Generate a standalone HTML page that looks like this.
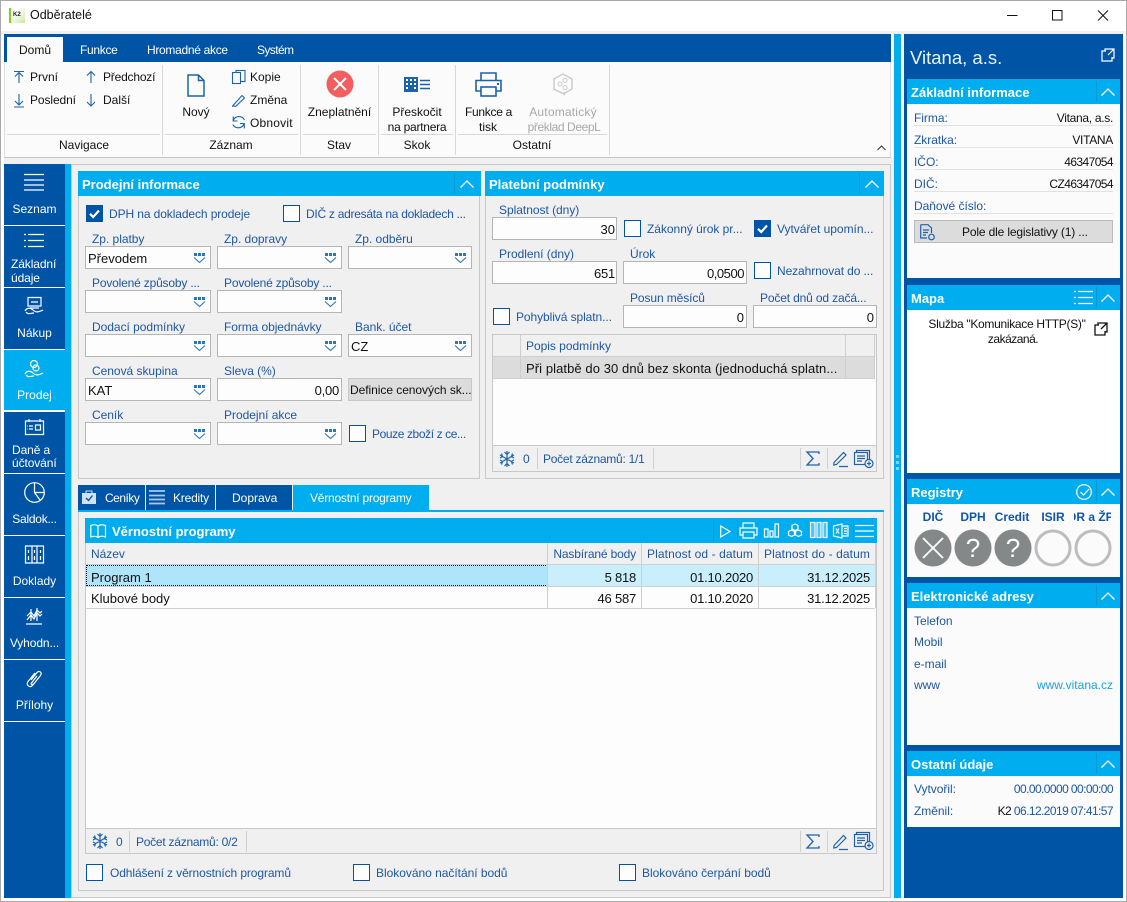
<!DOCTYPE html>
<html lang="cs"><head><meta charset="utf-8"><title>Odběratelé</title>
<style>
html,body{margin:0;padding:0;background:#fff}
body{position:relative;width:1127px;height:902px;overflow:hidden;font-family:"Liberation Sans",sans-serif;font-size:12px;color:#111}
div,span,svg{position:absolute;box-sizing:border-box}
.t{line-height:16px;white-space:nowrap;height:16px}
.l{color:#1d57a5;line-height:16px;white-space:nowrap;height:16px;letter-spacing:-.03px}
.c{text-align:center;transform:translateX(-50%)}
.r{text-align:right;transform:translateX(-100%)}
.d{font-size:13px;color:#111;line-height:16px;white-space:nowrap;height:16px;margin-top:1px}
.n{letter-spacing:-.22px}
.m{letter-spacing:-.58px}
.w{color:#fff;line-height:14px;text-align:center;left:4px;width:61px}
.i{background:#fdfdfd;border:1px solid #b5b5b5;height:23px}
.cb{width:17px;height:17px;border:1px solid #0054a6;background:#fdfdfd}
.cc{width:17px;height:17px;background:#0054a6}
.h{background:#00adef;height:25px;color:#fff;font-weight:bold;font-size:13px;line-height:27px;padding-left:4px;white-space:nowrap}
.p{background:#f0f0f0;border:1px solid #c8c8c8}
.b{background:#fbfbfb}
.s{background:#d8d8d8}
svg{overflow:visible;fill:none}
.ws{stroke:#fff;stroke-width:1.2}
.bs{stroke:#1d62ad;stroke-width:1.2}
</style></head><body>
<svg width="0" height="0" style="left:0;top:0">
<defs>
<symbol id="dd" viewBox="0 0 11 10" overflow="visible"><g fill="#2f74b8"><rect x="0" y="0" width="3" height="3"/><rect x="4" y="0" width="3" height="3"/><rect x="8" y="0" width="3" height="3"/></g><path d="M0 4.500L5.500 9.500L11 4.500" stroke="#2f74b8" fill="none" stroke-width="1.100"/></symbol>
<symbol id="ch" viewBox="0 0 14 8" overflow="visible"><path d="M.5 7.500L7 1L13.500 7.500" stroke="#fff" fill="none" stroke-width="1.300"/></symbol>
<symbol id="ck" viewBox="0 0 17 17"><path d="M4 8.800L7.200 12L13 5.500" stroke="#fff" fill="none" stroke-width="2.200"/></symbol>
<symbol id="snow" viewBox="0 0 16 16" overflow="visible"><g stroke="#1d62ad" stroke-width="1.200" fill="none"><path d="M8 0V16M1 4L15 12M15 4L1 12M5.500 1L8 3.500L10.500 1M5.500 15L8 12.500L10.500 15M1 7L3.500 5.500L2.500 2.500M15 7L12.500 5.500L13.500 2.500M1 9L3.500 10.500L2.500 13.500M15 9L12.500 10.500L13.500 13.500"/></g></symbol>
<symbol id="sig" viewBox="0 0 14 15" overflow="visible"><path d="M13 3V1H1L7 7.500L1 14H13V12" stroke="#1d62ad" fill="none" stroke-width="1.300"/></symbol>
<symbol id="pen" viewBox="0 0 15 16" overflow="visible"><path d="M1 11.500L10.500 1.500L13 4L3.500 13.500L.8 14ZM6 15.500H15" stroke="#1d62ad" fill="none" stroke-width="1.200"/></symbol>
<symbol id="add" viewBox="0 0 20 18" overflow="visible"><g stroke="#1d62ad" fill="#f0f0f0" stroke-width="1.200"><rect x="2.500" y=".5" width="13" height="11"/><rect x=".5" y="2.500" width="13" height="12"/><path d="M3 6H11M3 8.500H11M3 11H8" fill="none"/><circle cx="15" cy="13.500" r="4"/><path d="M15 11.500V15.500M13 13.500H17" fill="none"/></g></symbol>
</defs></svg>

<!-- window frame -->
<div style="left:0;top:0;width:1127px;height:1px;background:#aaa"></div>
<div style="left:0;top:0;width:1px;height:902px;background:#aaa"></div>
<div style="left:1126px;top:0;width:1px;height:902px;background:#aaa"></div>
<div style="left:0;top:901px;width:1127px;height:1px;background:#aaa"></div>
<div style="left:1px;top:31px;width:1125px;height:3px;background:#f0f0f0"></div>
<div style="left:9px;top:8px;width:16px;height:15px;background:linear-gradient(135deg,#fff 30%,#c9e8a0);border-left:2px solid #7ed321"></div>
<div style="left:13px;top:11px;font-size:6px;font-weight:bold;line-height:8px;color:#222">K2</div>
<div class="t" style="left:30px;top:7px;font-size:12.500px;color:#111">Odběratelé</div>
<svg style="left:1007px;top:10px" width="101" height="11"><path d="M0 5.500H10.500" stroke="#111"/><rect x="45.500" y=".5" width="9.500" height="9.500" stroke="#111"/><path d="M91 .5L101 10.500M101 .5L91 10.500" stroke="#111"/></svg>

<!-- ribbon -->
<div style="left:4px;top:34px;width:887px;height:28px;background:#0054a6"></div>
<div style="left:7px;top:37px;width:56px;height:25px;background:#fbfbfb"></div>
<div class="t" style="left:19px;top:42px;color:#111">Domů</div>
<div class="t" style="left:80px;top:42px;color:#fff;letter-spacing:-.3px">Funkce</div>
<div class="t" style="left:147px;top:42px;color:#fff;letter-spacing:-.3px">Hromadné akce</div>
<div class="t" style="left:257px;top:42px;color:#fff;letter-spacing:-.6px">Systém</div>
<div class="b" style="left:4px;top:62px;width:887px;height:96px;border-bottom:1px solid #c4c4c4;border-left:1px solid #ddd;border-right:1px solid #ddd"></div>
<div class="s" style="left:162px;top:65px;width:1px;height:90px"></div>
<div class="s" style="left:300px;top:65px;width:1px;height:90px"></div>
<div class="s" style="left:378px;top:65px;width:1px;height:90px"></div>
<div class="s" style="left:455px;top:65px;width:1px;height:90px"></div>
<div class="s" style="left:609px;top:65px;width:1px;height:90px"></div>
<div class="s" style="left:7px;top:134px;width:153px;height:1px"></div>
<div class="s" style="left:165px;top:134px;width:133px;height:1px"></div>
<div class="s" style="left:303px;top:134px;width:73px;height:1px"></div>
<div class="s" style="left:381px;top:134px;width:72px;height:1px"></div>
<div class="s" style="left:458px;top:134px;width:149px;height:1px"></div>
<div class="t c" style="left:84px;top:137px">Navigace</div>
<div class="t c" style="left:231px;top:137px">Záznam</div>
<div class="t c" style="left:339px;top:137px">Stav</div>
<div class="t c" style="left:417px;top:137px">Skok</div>
<div class="t c" style="left:532px;top:137px">Ostatní</div>
<svg style="left:13px;top:70px" width="90" height="38"><g stroke="#1d62ad" stroke-width="1.100"><path d="M1 1.500H11M6 13V2.500M2 6.500L6 2.500L10 6.500"/><path d="M6 24V35M2 31L6 35L10 31M1 37H11"/><path d="M78 13V1.500M74 5.500L78 1.500L82 5.500"/><path d="M78 24V36M74 32L78 36L82 32"/></g></svg>
<div class="t" style="left:30px;top:69px">První</div>
<div class="t" style="left:30px;top:92px;letter-spacing:-.1px">Poslední</div>
<div class="t" style="left:103px;top:69px;letter-spacing:-.2px">Předchozí</div>
<div class="t" style="left:103px;top:92px">Další</div>
<svg style="left:187px;top:74px" width="18" height="23"><path d="M1 1H11.500L17 6.500V22H1ZM11.500 1V6.500H17" stroke="#1d62ad" stroke-width="1.500"/></svg>
<div class="t c" style="left:196px;top:104px">Nový</div>
<svg style="left:232px;top:70px" width="14" height="60"><g stroke="#1d62ad" stroke-width="1.100"><rect x="4" y=".5" width="9" height="11"/><rect x=".5" y="2.500" width="8" height="11" fill="#fbfbfb"/><path d="M1 35.500L10 25.500L12.500 28L3.500 36.500ZM1 35.500L.5 37"/><path d="M12.500 50A6.200 6.200 0 0 0 1.200 50.500M.8 54.500A6.200 6.200 0 0 0 12 54M1.200 46.500V51H5.500M12.300 58.500V53.500H8"/></g></svg>
<div class="t" style="left:250px;top:69px">Kopie</div>
<div class="t" style="left:250px;top:92px">Změna</div>
<div class="t" style="left:250px;top:115px;letter-spacing:.2px">Obnovit</div>
<svg style="left:326px;top:70px" width="28" height="28"><circle cx="14" cy="14" r="13.500" fill="#f45d5d"/><path d="M8 8L20 20M20 8L8 20" stroke="#fff" stroke-width="2"/></svg>
<div class="t c" style="left:339.500px;top:104px">Zneplatnění</div>
<svg style="left:404px;top:77px" width="27" height="15"><rect x="0" y="0" width="14" height="15" fill="#1d62ad"/><g fill="#fff"><rect x="2" y="2" width="2" height="2"/><rect x="6" y="2" width="2" height="2"/><rect x="10" y="2" width="2" height="2"/><rect x="2" y="6" width="2" height="2"/><rect x="6" y="6" width="2" height="2"/><rect x="10" y="6" width="2" height="2"/><rect x="2" y="10" width="2" height="2"/><rect x="10" y="10" width="2" height="2"/></g><path d="M16 3.500H26M16 7.500H26M16 11.500H26" stroke="#1d62ad" stroke-width="1.500"/></svg>
<div class="t c" style="left:417px;top:104px">Přeskočit</div>
<div class="t c" style="left:417px;top:119px;letter-spacing:-.25px">na partnera</div>
<svg style="left:475px;top:72px" width="27" height="25"><g stroke="#1d62ad" stroke-width="1.600"><path d="M6 8V1H21V8"/><path d="M6 19H1V8.500H26V19H21"/><rect x="6" y="15" width="15" height="9"/></g><rect x="22" y="11" width="2" height="2" fill="#1d62ad"/></svg>
<div class="t c" style="left:488.500px;top:104px;letter-spacing:-.3px">Funkce a</div>
<div class="t c" style="left:488px;top:119px">tisk</div>
<svg style="left:553px;top:73px" width="20" height="23"><path d="M10 1L19 6V16L12 20L11 22V20L10 20.500L1 16V6Z" stroke="#ccc" stroke-width="1.500"/><circle cx="7" cy="11" r="2" stroke="#ccc"/><circle cx="12" cy="7.500" r="2" stroke="#ccc"/><circle cx="12" cy="14.500" r="2" stroke="#ccc"/></svg>
<div class="t c" style="left:563px;top:104px;color:#a8a8a8;letter-spacing:.2px">Automatický</div>
<div class="t c" style="left:564px;top:119px;color:#a8a8a8;letter-spacing:-.4px">překlad DeepL</div>
<svg style="left:877px;top:145px" width="9" height="6"><path d="M.5 5L4.500 1L8.500 5" stroke="#333"/></svg>

<!-- splitter -->
<div style="left:894px;top:34px;width:7px;height:864px;background:#00adef"></div>
<div style="left:891px;top:158px;width:3px;height:740px;background:#f0f0f0"></div>
<div style="left:896px;top:455px;width:3px;height:3px;background:#7ad4f7"></div>
<div style="left:896px;top:461px;width:3px;height:3px;background:#7ad4f7"></div>
<div style="left:896px;top:467px;width:3px;height:3px;background:#7ad4f7"></div>

<!-- left sidebar -->
<div style="left:4px;top:158px;width:887px;height:6px;background:#f0f0f0"></div>
<div style="left:4px;top:164px;width:61px;height:734px;background:#0054a6"></div>
<div style="left:65px;top:164px;width:6px;height:734px;background:#00adef"></div>
<div style="left:4px;top:225px;width:61px;height:1px;background:#fff"></div>
<div style="left:4px;top:287px;width:61px;height:1px;background:#fff"></div>
<div style="left:4px;top:349px;width:61px;height:62px;background:#00adef;border-top:1px solid #fff;border-bottom:1px solid #fff"></div>
<div style="left:4px;top:473px;width:61px;height:1px;background:#fff"></div>
<div style="left:4px;top:411px;width:61px;height:1px;background:#fff"></div>
<div style="left:4px;top:535px;width:61px;height:1px;background:#fff"></div>
<div style="left:4px;top:597px;width:61px;height:1px;background:#fff"></div>
<div style="left:4px;top:659px;width:61px;height:1px;background:#fff"></div>
<div style="left:4px;top:721px;width:61px;height:1px;background:#fff"></div>
<svg style="left:24px;top:174px" width="21" height="17"><path class="ws" d="M0 .5H20M0 6H20M0 11H20M0 16H20"/></svg>
<div class="w" style="top:202px">Seznam</div>
<svg style="left:24px;top:234px" width="21" height="14"><path class="ws" d="M4 .5H20M4 6.500H20M4 12.500H20M0 .5H2M0 6.500H2M0 12.500H2"/></svg>
<div class="w" style="top:257px;left:11px;width:54px;text-align:left;letter-spacing:-.1px">Základní<br>údaje</div>
<svg style="left:24px;top:297px" width="20" height="19"><path class="ws" d="M4 .5H17V9H4ZM6 11H15M7 5H14"/><path class="ws" d="M1 14C3 10 7 11 9 13C12 16 15 15 19 13M2 15C4 18 7 16 10 16"/></svg>
<div class="w" style="top:326px">Nákup</div>
<svg style="left:24px;top:360px" width="20" height="19"><circle class="ws" cx="10" cy="4" r="3.500"/><circle class="ws" cx="12" cy="8" r="3"/><path class="ws" d="M1 14C3 10 7 11 9 13C12 16 15 15 19 13M2 15C4 18 7 16 10 16"/></svg>
<div class="w" style="top:388px">Prodej</div>
<svg style="left:25px;top:419px" width="19" height="16"><path class="ws" d="M.5 2H18.500V15.500H.5ZM4 0V3M15 0V3M4 7H8M4 10H8M2.500 7H3M2.500 10H3"/><rect x="10.500" y="6" width="5" height="5" class="ws"/></svg>
<div class="w" style="top:444px;left:12px;width:53px;text-align:left;line-height:13px;letter-spacing:-.1px">Daně a<br>účtování</div>
<svg style="left:24px;top:482px" width="21" height="21"><circle class="ws" cx="10.500" cy="10.500" r="9.800"/><path class="ws" d="M10.500 1V10.500H20M10.500 10.500L16 18"/></svg>
<div class="w" style="top:512px;letter-spacing:-.25px">Saldok...</div>
<svg style="left:25px;top:545px" width="19" height="19"><path class="ws" d="M.5 1H7V18H.5ZM7 1H12V18H7ZM12 1H18.500V18H12ZM3.500 5V8M3.500 11V15M9.500 5V8M9.500 11V15M15.500 5V8M15.500 11V15"/></svg>
<div class="w" style="top:574px">Doklady</div>
<svg style="left:26px;top:607px" width="17" height="18"><path class="ws" d="M0 17H16M1 9L5 5L8 9L11 3L14 6L16 4M1 13L5 8L8 12L11 6L14 9L16 7M5 2V14M11 1V14" stroke-width="1"/></svg>
<div class="w" style="top:636px;letter-spacing:-.1px">Vyhodn...</div>
<svg style="left:26px;top:669px" width="17" height="20"><path class="ws" d="M5 11L11 3.500C13 1 16.500 3.500 14.500 6.500L6.500 16.500C4 19.500 -.5 16 2 12.500L9 4M11 7L5.500 14C4.500 15.500 6 16 7 15"/></svg>
<div class="w" style="top:698px">Přílohy</div>

<!-- main area -->
<div class="p" style="left:71px;top:164px;width:820px;height:734px"></div>

<!-- Prodejní informace -->
<div class="p" style="left:78px;top:171px;width:402px;height:308px"></div>
<div class="h" style="left:78px;top:171px;width:403px">Prodejní informace</div>
<div style="left:454px;top:173px;width:1px;height:21px;background:#0b97d0"></div>
<svg style="left:460px;top:180px" width="14" height="8"><use href="#ch"/></svg>

<div class="cc" style="left:86px;top:205px"><svg width="17" height="17"><use href="#ck"/></svg></div>
<div class="l" style="left:109px;top:206px;letter-spacing:-.1px">DPH na dokladech prodeje</div>
<div class="cb" style="left:283px;top:205px"></div>
<div class="l" style="left:306px;top:206px;letter-spacing:-.27px">DIČ z adresáta na dokladech ...</div>

<div class="l" style="left:92px;top:231px">Zp. platby</div>
<div class="l" style="left:224px;top:231px">Zp. dopravy</div>
<div class="l" style="left:355px;top:231px">Zp. odběru</div>
<div class="i" style="left:85px;top:246px;width:126px"></div>
<div class="i" style="left:217px;top:246px;width:125px"></div>
<div class="i" style="left:348px;top:246px;width:124px"></div>
<div class="d" style="left:88px;top:250px">Převodem</div>

<div class="l" style="left:92px;top:275px;letter-spacing:-.18px">Povolené způsoby ...</div>
<div class="l" style="left:224px;top:275px;letter-spacing:-.18px">Povolené způsoby ...</div>
<div class="i" style="left:85px;top:290px;width:126px"></div>
<div class="i" style="left:217px;top:290px;width:125px"></div>

<div class="l" style="left:92px;top:319px">Dodací podmínky</div>
<div class="l" style="left:224px;top:319px;letter-spacing:-.08px">Forma objednávky</div>
<div class="l" style="left:355px;top:319px">Bank. účet</div>
<div class="i" style="left:85px;top:334px;width:126px"></div>
<div class="i" style="left:217px;top:334px;width:125px"></div>
<div class="i" style="left:348px;top:334px;width:124px"></div>
<div class="d" style="left:351px;top:338px">CZ</div>

<div class="l" style="left:92px;top:363px">Cenová skupina</div>
<div class="l" style="left:224px;top:363px">Sleva (%)</div>
<div class="i" style="left:85px;top:378px;width:126px"></div>
<div class="i" style="left:217px;top:378px;width:125px"></div>
<div class="d" style="left:88px;top:382px">KAT</div>
<div class="d r n" style="left:339px;top:382px">0,00</div>
<div style="left:348px;top:378px;width:124px;height:23px;background:#dcdcdc;border:1px solid #c8c8c8"></div>
<div class="t" style="left:350px;top:382px;color:#111;letter-spacing:-.05px">Definice cenových sk...</div>

<div class="l" style="left:92px;top:407px">Ceník</div>
<div class="l" style="left:224px;top:407px">Prodejní akce</div>
<div class="i" style="left:85px;top:422px;width:126px"></div>
<div class="i" style="left:217px;top:422px;width:125px"></div>
<div class="cb" style="left:349px;top:425px"></div>
<div class="l" style="left:372px;top:426px;letter-spacing:-.4px">Pouze zboží z ce...</div>

<svg style="left:194px;top:253px" width="11" height="10"><use href="#dd"/></svg>
<svg style="left:325px;top:253px" width="11" height="10"><use href="#dd"/></svg>
<svg style="left:455px;top:253px" width="11" height="10"><use href="#dd"/></svg>
<svg style="left:194px;top:297px" width="11" height="10"><use href="#dd"/></svg>
<svg style="left:325px;top:297px" width="11" height="10"><use href="#dd"/></svg>
<svg style="left:194px;top:341px" width="11" height="10"><use href="#dd"/></svg>
<svg style="left:325px;top:341px" width="11" height="10"><use href="#dd"/></svg>
<svg style="left:455px;top:341px" width="11" height="10"><use href="#dd"/></svg>
<svg style="left:194px;top:385px" width="11" height="10"><use href="#dd"/></svg>
<svg style="left:194px;top:429px" width="11" height="10"><use href="#dd"/></svg>
<svg style="left:325px;top:429px" width="11" height="10"><use href="#dd"/></svg>

<!-- Platební podmínky -->
<div class="p" style="left:485px;top:171px;width:399px;height:308px"></div>
<div class="h" style="left:485px;top:171px;width:399px">Platební podmínky</div>
<div style="left:859px;top:173px;width:1px;height:21px;background:#0b97d0"></div>
<svg style="left:865px;top:180px" width="14" height="8"><use href="#ch"/></svg>

<div class="l" style="left:499px;top:202px">Splatnost (dny)</div>
<div class="i" style="left:492px;top:217px;width:125px"></div>
<div class="d r" style="left:615px;top:221px">30</div>
<div class="cb" style="left:624px;top:220px"></div>
<div class="l" style="left:647px;top:221px">Zákonný úrok pr...</div>
<div class="cc" style="left:754px;top:220px"><svg width="17" height="17"><use href="#ck"/></svg></div>
<div class="l" style="left:777px;top:221px">Vytvářet upomín...</div>

<div class="l" style="left:499px;top:246px">Prodlení (dny)</div>
<div class="l" style="left:630px;top:246px">Úrok</div>
<div class="i" style="left:492px;top:261px;width:125px"></div>
<div class="d r n" style="left:615px;top:265px">651</div>
<div class="i" style="left:623px;top:261px;width:124px"></div>
<div class="d r" style="left:744px;top:265px;letter-spacing:-.45px">0,0500</div>
<div class="cb" style="left:754px;top:262px"></div>
<div class="l" style="left:777px;top:263px;letter-spacing:-.1px">Nezahrnovat do ...</div>

<div class="l" style="left:630px;top:290px;letter-spacing:-.1px">Posun měsíců</div>
<div class="l" style="left:760px;top:290px;letter-spacing:-.15px">Počet dnů od začá...</div>
<div class="cb" style="left:493px;top:308px"></div>
<div class="l" style="left:516px;top:309px;letter-spacing:-.08px">Pohyblivá splatn...</div>
<div class="i" style="left:623px;top:305px;width:124px"></div>
<div class="d r" style="left:744px;top:309px">0</div>
<div class="i" style="left:753px;top:305px;width:124px"></div>
<div class="d r" style="left:874px;top:309px">0</div>

<div style="left:492px;top:334px;width:385px;height:138px;background:#fdfdfd;border:1px solid #c8c8c8"></div>
<div style="left:493px;top:335px;width:383px;height:22px;background:#f0f0f0"></div>
<div style="left:493px;top:357px;width:381px;height:22px;background:#dcdcdc"></div>
<div style="left:520px;top:335px;width:1px;height:44px;background:#cfcfcf"></div>
<div style="left:845px;top:335px;width:1px;height:44px;background:#cfcfcf"></div>
<div style="left:874px;top:335px;width:1px;height:44px;background:#cfcfcf"></div>
<div style="left:493px;top:356px;width:381px;height:1px;background:#cfcfcf"></div>
<div style="left:493px;top:378px;width:381px;height:1px;background:#cfcfcf"></div>
<div class="l" style="left:526px;top:338px">Popis podmínky</div>
<div class="d" style="left:526px;top:360px;letter-spacing:.08px">Při platbě do 30 dnů bez skonta (jednoduchá splatn...</div>
<div style="left:493px;top:445px;width:383px;height:26px;background:#f0f0f0;border-top:1px solid #c8c8c8"></div>
<div style="left:537px;top:448px;width:1px;height:21px;background:#d0d0d0"></div>
<div style="left:653px;top:448px;width:1px;height:21px;background:#d0d0d0"></div>
<div style="left:800px;top:448px;width:1px;height:21px;background:#d0d0d0"></div>
<div style="left:827px;top:448px;width:1px;height:21px;background:#d0d0d0"></div>
<svg style="left:499px;top:451px" width="16" height="16"><use href="#snow"/></svg>
<div class="l" style="left:523px;top:451px">0</div>
<div class="l" style="left:543px;top:451px;letter-spacing:-.25px">Počet záznamů: 1/1</div>
<svg style="left:806px;top:451px" width="14" height="15"><use href="#sig"/></svg>
<svg style="left:833px;top:451px" width="15" height="16"><use href="#pen"/></svg>
<svg style="left:854px;top:450px" width="20" height="18"><use href="#add"/></svg>

<!-- Tabs -->
<div style="left:78px;top:510px;width:806px;height:381px;background:#f0f0f0;border:1px solid #c8c8c8;border-top:0"></div>
<div style="left:78px;top:485px;width:67px;height:25px;background:#0054a6"></div>
<div style="left:146px;top:485px;width:69px;height:25px;background:#0054a6"></div>
<div style="left:216px;top:485px;width:76px;height:25px;background:#0054a6"></div>
<div style="left:293px;top:485px;width:136px;height:27px;background:#00adef"></div>
<div style="left:78px;top:510px;width:806px;height:2px;background:#00adef"></div>
<svg style="left:82px;top:490px" width="15" height="14"><rect y="3" width="14" height="11" fill="#cfe3f5"/><path d="M4 3V1H10V3" stroke="#cfe3f5"/><path d="M4 8L6.500 10.500L10.500 5.500" stroke="#0054a6" stroke-width="1.300"/></svg>
<div class="t" style="left:105px;top:490px;color:#fff;letter-spacing:-.5px">Ceníky</div>
<svg style="left:149px;top:490px" width="17" height="15"><path d="M0 1H16M0 5.500H16M0 9.500H16M0 13.500H16" stroke="#a9c9e8" stroke-width="1.800"/></svg>
<div class="t" style="left:173px;top:490px;color:#fff;letter-spacing:-.2px">Kredity</div>
<div class="t" style="left:232px;top:490px;color:#fff">Doprava</div>
<div class="t" style="left:310px;top:490px;color:#fff;letter-spacing:-.22px">Věrnostní programy</div>

<!-- Grid -->
<div style="left:85px;top:518px;width:792px;height:336px;background:#fdfdfd;border:1px solid #c8c8c8"></div>
<div class="h" style="left:85px;top:518px;width:792px;padding-left:27px">Věrnostní programy</div>
<svg style="left:90px;top:524px" width="17" height="15"><path class="ws" d="M8 2C6 .5 3 .5 .8 1.500V13C3 12 6 12 8 13.500C10 12 13 12 15.500 13V1.500C13 .5 10 .5 8 2ZM8 2V13.500"/></svg>
<div style="left:713px;top:520px;width:1px;height:21px;background:#0b97d0"></div>
<div style="left:737px;top:520px;width:1px;height:21px;background:#0b97d0"></div>
<div style="left:853px;top:520px;width:1px;height:21px;background:#0b97d0"></div>
<svg style="left:720px;top:525px" width="11" height="13"><path class="ws" d="M.7 1V12L10 6.500Z"/></svg>
<svg style="left:739px;top:522px" width="20" height="18"><path class="ws" d="M4 6V1H15V6M4 13H1V6H18V13H15M4 10H15V16H4Z"/></svg>
<svg style="left:764px;top:523px" width="17" height="17"><path class="ws" d="M.5 6H4V14H.5ZM6 8H9V14H6ZM11 1H14.500V14H11Z"/></svg>
<svg style="left:787px;top:523px" width="17" height="16"><path class="ws" d="M8 1L11 2.500V6L8 7.500L5 6V2.500ZM4.500 7L7.500 8.500V12L4.500 13.500L1.500 12V8.500ZM11.500 7L14.500 8.500V12L11.500 13.500L8.500 12V8.500Z"/></svg>
<svg style="left:810px;top:522px" width="18" height="17"><path class="ws" d="M.5 .5H5V15.500H.5ZM7 .5H11V15.500H7ZM13 .5H17V15.500H13Z" fill="#fff" fill-opacity=".3"/></svg>
<svg style="left:833px;top:523px" width="16" height="16"><path class="ws" d="M.5 3L9 1V15L.5 13ZM9 3H15V13H9M3 5.500L6 10.500M6 5.500L3 10.500M11 5.500H14M11 8H14M11 10.500H14"/></svg>
<svg style="left:855px;top:525px" width="20" height="12"><path class="ws" d="M0 .5H19M0 6H19M0 11.500H19"/></svg>

<div style="left:86px;top:543px;width:790px;height:22px;background:#f0f0f0"></div>
<div style="left:86px;top:565px;width:789px;height:21px;background:#c9eefc"></div>
<div style="left:86px;top:565px;width:462px;height:21px;background:#aee5fb;border:1px dotted #111"></div>
<div style="left:86px;top:586px;width:789px;height:1px;background:#cfcfcf"></div>
<div style="left:86px;top:608px;width:789px;height:1px;background:#cfcfcf"></div>
<div style="left:86px;top:564px;width:789px;height:1px;background:#cfcfcf"></div>
<div style="left:547px;top:543px;width:1px;height:65px;background:#cfcfcf"></div>
<div style="left:641px;top:543px;width:1px;height:65px;background:#cfcfcf"></div>
<div style="left:758px;top:543px;width:1px;height:65px;background:#cfcfcf"></div>
<div style="left:875px;top:543px;width:1px;height:65px;background:#cfcfcf"></div>
<div class="l" style="left:91px;top:546px">Název</div>
<div class="l r" style="left:636px;top:546px;letter-spacing:-.15px">Nasbírané body</div>
<div class="l r" style="left:753px;top:546px;letter-spacing:.1px">Platnost od - datum</div>
<div class="l r" style="left:870px;top:546px;letter-spacing:.1px">Platnost do - datum</div>
<div class="d" style="left:91px;top:569px">Program 1</div>
<div class="d r n" style="left:636px;top:569px">5 818</div>
<div class="d r n" style="left:753px;top:569px">01.10.2020</div>
<div class="d r n" style="left:870px;top:569px">31.12.2025</div>
<div class="d" style="left:91px;top:590px">Klubové body</div>
<div class="d r n" style="left:636px;top:590px">46 587</div>
<div class="d r n" style="left:753px;top:590px">01.10.2020</div>
<div class="d r n" style="left:870px;top:590px">31.12.2025</div>

<div style="left:86px;top:828px;width:790px;height:25px;background:#f0f0f0;border-top:1px solid #c8c8c8"></div>
<div style="left:129px;top:831px;width:1px;height:21px;background:#d0d0d0"></div>
<div style="left:246px;top:831px;width:1px;height:21px;background:#d0d0d0"></div>
<div style="left:800px;top:831px;width:1px;height:21px;background:#d0d0d0"></div>
<div style="left:827px;top:831px;width:1px;height:21px;background:#d0d0d0"></div>
<svg style="left:92px;top:833px" width="16" height="16"><use href="#snow"/></svg>
<div class="l" style="left:116px;top:834px">0</div>
<div class="l" style="left:136px;top:834px;letter-spacing:-.25px">Počet záznamů: 0/2</div>
<svg style="left:806px;top:834px" width="14" height="15"><use href="#sig"/></svg>
<svg style="left:833px;top:834px" width="15" height="16"><use href="#pen"/></svg>
<svg style="left:854px;top:832px" width="20" height="18"><use href="#add"/></svg>

<div class="cb" style="left:86px;top:864px"></div>
<div class="l" style="left:110px;top:865px;letter-spacing:-.1px">Odhlášení z věrnostních programů</div>
<div class="cb" style="left:353px;top:864px"></div>
<div class="l" style="left:376px;top:865px">Blokováno načítání bodů</div>
<div class="cb" style="left:619px;top:864px"></div>
<div class="l" style="left:642px;top:865px">Blokováno čerpání bodů</div>

<!-- Right panel -->
<div style="left:904px;top:34px;width:219px;height:864px;background:#0054a6"></div>
<div class="t" style="left:910px;top:46px;height:24px;line-height:24px;font-size:18.500px;color:#e8f2fb">Vitana, a.s.</div>
<svg style="left:1101px;top:48px" width="14" height="14"><path class="ws" d="M5 3H1V13H11V9M4 3V1H13V10H11M7 7L13 1M9 1H13V5" stroke-width="1.300"/></svg>

<div class="h" style="left:907px;top:79px;width:213px">Základní informace</div>
<div class="b" style="left:907px;top:104px;width:213px;height:174px"></div>
<div style="left:1096px;top:81px;width:1px;height:21px;background:#0b97d0"></div>
<svg style="left:1101px;top:88px" width="14" height="8"><use href="#ch"/></svg>
<div class="l" style="left:914px;top:110px">Firma:</div><div class="t r" style="left:1113px;top:110px;letter-spacing:-.3px">Vitana, a.s.</div>
<div class="l" style="left:914px;top:132px">Zkratka:</div><div class="t r" style="left:1113px;top:132px;letter-spacing:-.3px">VITANA</div>
<div class="l" style="left:914px;top:154px">IČO:</div><div class="t r m" style="left:1113px;top:154px">46347054</div>
<div class="l" style="left:914px;top:176px">DIČ:</div><div class="t r m" style="left:1113px;top:176px">CZ46347054</div>
<div class="l" style="left:914px;top:198px">Daňové číslo:</div>
<div style="left:914px;top:125px;width:199px;height:1px;background:#e2e2e2"></div>
<div style="left:914px;top:147px;width:199px;height:1px;background:#e2e2e2"></div>
<div style="left:914px;top:169px;width:199px;height:1px;background:#e2e2e2"></div>
<div style="left:914px;top:191px;width:199px;height:1px;background:#e2e2e2"></div>
<div style="left:914px;top:213px;width:199px;height:1px;background:#e2e2e2"></div>
<div style="left:914px;top:220px;width:199px;height:23px;background:#dcdcdc;border:1px solid #bbb"></div>
<svg style="left:920px;top:224px" width="15" height="17"><path class="bs" d="M.7 .7H8L11.500 4V9M.7 .7V14H7M3 6H9M3 8.500H8M3 11H6"/><circle cx="11.500" cy="13" r="2.800" class="bs"/></svg>
<div class="t" style="left:962px;top:224px;letter-spacing:-.15px">Pole dle legislativy (1) ...</div>

<div class="h" style="left:907px;top:285px;width:213px">Mapa</div>
<div class="b" style="left:907px;top:310px;width:213px;height:163px;background:#fff"></div>
<div style="left:1096px;top:287px;width:1px;height:21px;background:#0b97d0"></div>
<svg style="left:1074px;top:291px" width="20" height="13"><path class="ws" d="M4 .5H19M4 6.500H19M4 12.500H19M0 .5H2M0 6.500H2M0 12.500H2"/></svg>
<svg style="left:1101px;top:294px" width="14" height="8"><use href="#ch"/></svg>
<div class="t c" style="left:1007px;top:316px;letter-spacing:-.3px">Služba "Komunikace HTTP(S)"</div>
<div class="t c" style="left:1013px;top:331px;letter-spacing:-.5px">zakázaná.</div>
<svg style="left:1094px;top:322px" width="14" height="14"><path d="M5 3H1V13H11V9M4 3V1H13V10H11M7 7L13 1M9 1H13V5" stroke="#111" stroke-width="1.300"/></svg>

<div class="h" style="left:907px;top:479px;width:213px">Registry</div>
<div class="b" style="left:907px;top:504px;width:213px;height:73px"></div>
<div style="left:1096px;top:481px;width:1px;height:21px;background:#0b97d0"></div>
<svg style="left:1076px;top:484px" width="17" height="17"><circle class="ws" cx="8" cy="8" r="7.300"/><path class="ws" d="M4.500 8L7.500 11L13 5"/></svg>
<svg style="left:1101px;top:488px" width="14" height="8"><use href="#ch"/></svg>
<div class="t c" style="left:933px;top:509px;font-weight:bold;color:#0f57a6">DIČ</div>
<div class="t c" style="left:973px;top:509px;font-weight:bold;color:#0f57a6">DPH</div>
<div class="t c" style="left:1012px;top:509px;font-weight:bold;color:#0f57a6">Credit</div>
<div class="t c" style="left:1053px;top:509px;font-weight:bold;color:#0f57a6">ISIR</div>
<div style="left:1074px;top:509px;width:37px;height:16px;overflow:hidden"><span class="t" style="left:-7px;top:0;font-weight:bold;color:#0f57a6">OR a ŽP</span></div>
<svg style="left:914px;top:529px" width="198" height="38">
<circle cx="19" cy="19" r="18.500" fill="#858889"/><path d="M9 9L29 29M29 9L9 29" stroke="#fff" stroke-width="1.800"/>
<circle cx="59" cy="19" r="18.500" fill="#858889"/><circle cx="99" cy="19" r="18.500" fill="#858889"/>
<circle cx="139" cy="19" r="17" stroke="#bdbdbd" stroke-width="3"/><circle cx="179" cy="19" r="17" stroke="#bdbdbd" stroke-width="3"/>
<text x="59" y="28" text-anchor="middle" font-family="Liberation Sans" font-size="26" fill="#fff">?</text>
<text x="99" y="28" text-anchor="middle" font-family="Liberation Sans" font-size="26" fill="#fff">?</text></svg>

<div class="h" style="left:907px;top:583px;width:213px">Elektronické adresy</div>
<div class="b" style="left:907px;top:608px;width:213px;height:137px"></div>
<div style="left:1096px;top:585px;width:1px;height:21px;background:#0b97d0"></div>
<svg style="left:1101px;top:592px" width="14" height="8"><use href="#ch"/></svg>
<div class="l" style="left:914px;top:613px">Telefon</div>
<div class="l" style="left:914px;top:634px">Mobil</div>
<div class="l" style="left:914px;top:656px">e-mail</div>
<div class="l" style="left:914px;top:677px">www</div>
<div class="t r" style="left:1113px;top:677px;color:#1aa3e0">www.vitana.cz</div>

<div class="h" style="left:907px;top:751px;width:213px">Ostatní údaje</div>
<div class="b" style="left:907px;top:776px;width:213px;height:51px"></div>
<div style="left:1096px;top:753px;width:1px;height:21px;background:#0b97d0"></div>
<svg style="left:1101px;top:760px" width="14" height="8"><use href="#ch"/></svg>
<div class="l" style="left:914px;top:781px">Vytvořil:</div>
<div class="l r m" style="left:1113px;top:781px">00.00.0000 00:00:00</div>
<div class="l" style="left:914px;top:803px">Změnil:</div>
<div class="l r m" style="left:1113px;top:803px"><span style="position:static;color:#111">K2</span> 06.12.2019 07:41:57</div>
</body></html>
